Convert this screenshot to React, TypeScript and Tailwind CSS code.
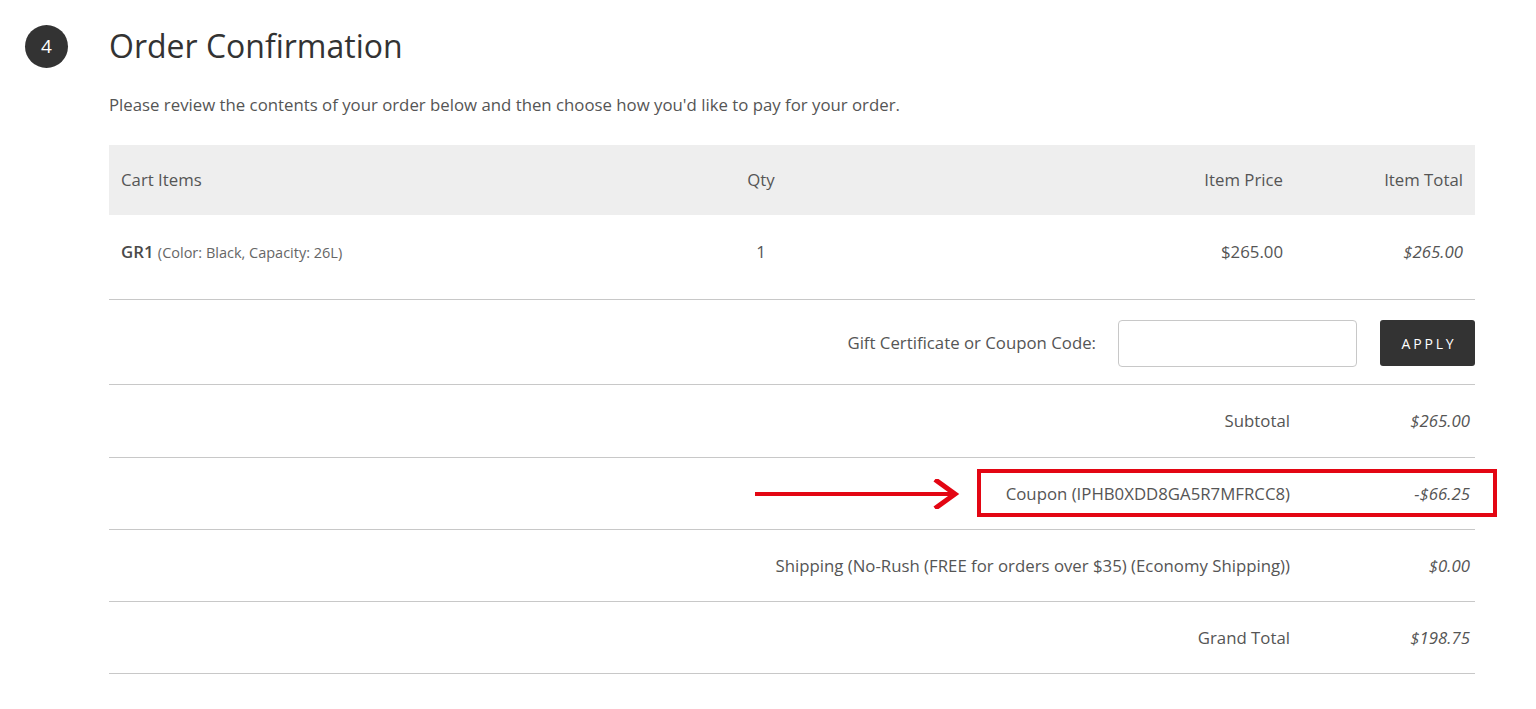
import React from 'react';

const font = { fontFamily: '"Open Sans", "Liberation Sans", sans-serif' };

const totals = [
  { label: 'Subtotal', value: '$265.00', h: 'h-[73px]' },
  { label: 'Coupon (IPHB0XDD8GA5R7MFRCC8)', value: '-$66.25', highlight: true, h: 'h-[72px]' },
  { label: 'Shipping (No-Rush (FREE for orders over $35) (Economy Shipping))', value: '$0.00', h: 'h-[72px]' },
  { label: 'Grand Total', value: '$198.75', h: 'h-[72px]' },
];

const App: React.FC = () => {
  return (
    <div className="min-h-screen bg-white pt-[25px] pl-[25px] text-[#555]" style={font}>
      {/* step heading */}
      <div className="flex items-center gap-[41px] h-[43px]">
        <div className="w-[43px] h-[43px] rounded-full bg-[#333] text-white flex items-center justify-center text-[19px]">4</div>
        <h1 className="text-[32px] text-[#333] leading-none -mt-[1px]">Order Confirmation</h1>
      </div>

      <div className="ml-[84px] w-[1366px]">
        <p className="mt-[25px] text-[16.8px] leading-6 text-[#555]">
          Please review the contents of your order below and then choose how you'd like to pay for your order.
        </p>

        <div className="mt-[28px] text-[16.8px]">
          {/* header */}
          <div className="grid grid-cols-[560px_184px_442px_180px] h-[70px] items-center bg-[#eeeeee] text-[#555]">
            <div className="pl-3">Cart Items</div>
            <div className="text-center">Qty</div>
            <div className="text-right pr-3">Item Price</div>
            <div className="text-right pr-3">Item Total</div>
          </div>

          {/* item row */}
          <div className="grid grid-cols-[560px_184px_442px_180px] h-[85px] items-center pb-[11px] border-b border-[#c8c8c8]">
            <div className="pl-3">
              <span className="font-semibold text-[#4a4a4a]">GR1</span>{' '}
              <span className="text-[14.5px] text-[#666]">(Color: Black, Capacity: 26L)</span>
            </div>
            <div className="text-center">1</div>
            <div className="text-right pr-3">$265.00</div>
            <div className="text-right pr-3 italic">$265.00</div>
          </div>

          {/* coupon entry */}
          <div className="flex items-center justify-end h-[85px] pt-[2px] border-b border-[#c8c8c8]">
            <label className="text-[#555]">Gift Certificate or Coupon Code:</label>
            <input
              type="text"
              className="ml-[22px] w-[239px] h-[47px] rounded-[4px] border border-[#c8c8c8] outline-none px-3"
            />
            <button className="ml-[23px] w-[95px] h-[46px] rounded-[3px] bg-[#333] text-white text-[14px] tracking-[0.2em] pl-[3px]">
              APPLY
            </button>
          </div>

          {/* totals */}
          {totals.map((t) => (
            <div
              key={t.label}
              className={`relative grid grid-cols-[1fr_185px] ${t.h} items-center border-b border-[#c8c8c8]`}
            >
              <div className="text-right">{t.label}</div>
              <div className="text-right pr-[5px] italic">{t.value}</div>
              {t.highlight && (
                <>
                  <div className="absolute left-[868px] top-[11px] w-[520px] h-[48px] border-[4px] border-[#e30613] pointer-events-none" />
                  <svg
                    className="absolute left-[646px] top-[21px]"
                    width="206"
                    height="30"
                    viewBox="0 0 206 30"
                  >
                    <line x1="0" y1="15" x2="200" y2="15" stroke="#e30613" strokeWidth="4" />
                    <polyline points="182,2 200,15 182,28" fill="none" stroke="#e30613" strokeWidth="5" strokeLinecap="square" />
                  </svg>
                </>
              )}
            </div>
          ))}
        </div>
      </div>
    </div>
  );
};

export default App;
